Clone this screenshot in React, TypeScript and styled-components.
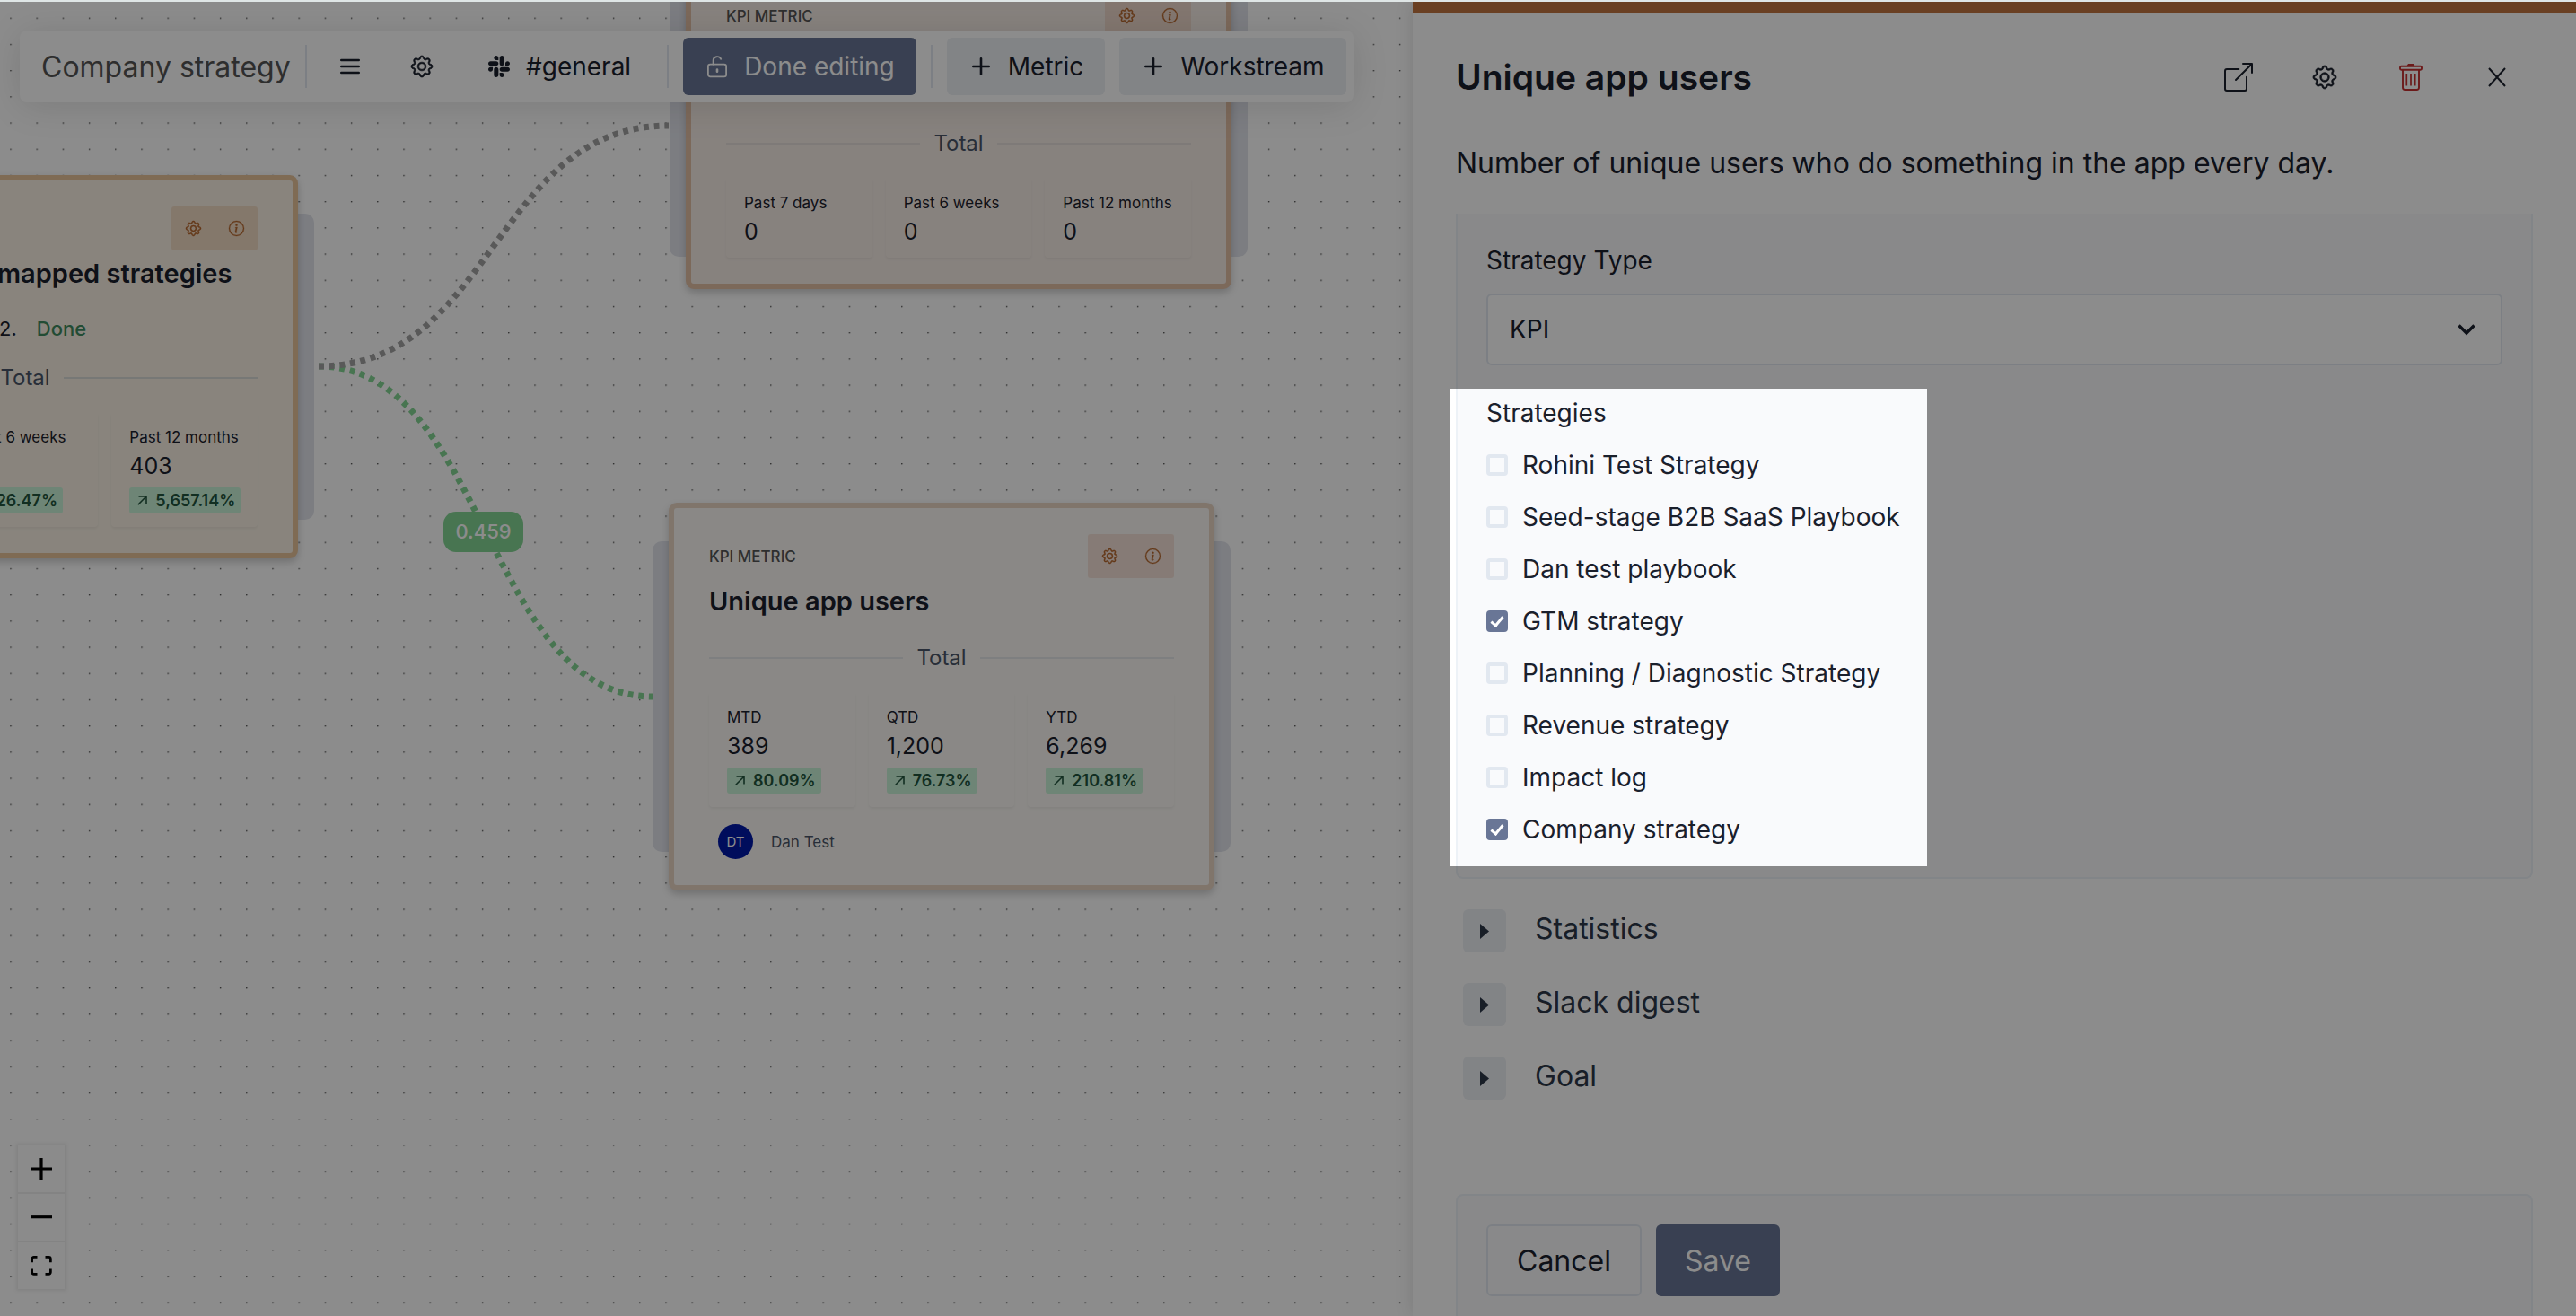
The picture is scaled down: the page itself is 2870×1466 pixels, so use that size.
import React, { useState } from "react";
import styled, { createGlobalStyle } from "styled-components";
import { BsBoxArrowUpRight, BsGear, BsInfoCircle, BsSlack } from "react-icons/bs";

const GlobalStyle = createGlobalStyle`
  *, *::before, *::after { box-sizing: border-box; }
  body {
    margin: 0;
    background: #fff;
    color: #1a202c;
    font-family: Inter, "Liberation Sans", sans-serif;
  }
  button, input, select { font: inherit; color: inherit; }
  h1, h2, p { margin: 0; }
`;

const Page = styled.div`
  display: flex;
  height: 100vh;
  overflow: hidden;
  border-top: 2px solid #dfe6e6;
`;

/* ---------- canvas ---------- */

const Canvas = styled.main`
  position: relative;
  flex: 1;
  min-width: 0;
  overflow: hidden;
`;

const Graph = styled.svg`
  position: absolute;
  inset: 0;
  width: 100%;
  height: 100%;
`;

const Node = styled.article<{ $x: number; $y: number }>`
  position: absolute;
  left: ${(p) => p.$x}px;
  top: ${(p) => p.$y}px;
  width: 608px;

  &::before {
    content: "";
    position: absolute;
    inset: 10% -18px;
    border-radius: 10px;
    background: #e2e4ec;
  }
`;

const Card = styled.div<{ $border: string; $fill: string }>`
  position: relative;
  display: flex;
  flex-direction: column;
  padding: 29px 39px;
  border: 6px solid ${(p) => p.$border};
  border-radius: 9px;
  background: ${(p) => p.$fill};
  box-shadow: 0 4px 8px rgba(0, 0, 0, 0.2);
`;

const CardHeader = styled.header`
  display: flex;
  align-items: center;
  justify-content: space-between;
  height: 49px;
`;

const Kind = styled.span`
  font-size: 17px;
  font-weight: 500;
  color: #555;
`;

const CardTools = styled.div<{ $fill: string }>`
  display: flex;
  align-self: stretch;
  border-radius: 3px;
  background: ${(p) => p.$fill};
`;

const CardTool = styled.button`
  display: grid;
  place-items: center;
  width: 48px;
  padding: 0;
  border: 0;
  background: none;
  color: #b5652b;
`;

const CardTitle = styled.h2`
  margin-top: 6px;
  font-size: 29px;
  font-weight: 600;
  line-height: 40px;
  white-space: nowrap;
`;

const Status = styled.p`
  display: flex;
  gap: 22px;
  margin-top: 26px;
  font-size: 22px;
  line-height: 30px;
  white-space: nowrap;

  strong { font-weight: 500; color: #3f8a60; }
`;

const Total = styled.div<{ $gap: number; $line: string }>`
  display: flex;
  align-items: center;
  gap: 15px;
  margin: ${(p) => p.$gap}px 0 22px;
  font-size: 24px;
  line-height: 32px;
  color: #4a5568;

  &::before, &::after {
    content: "";
    flex: 1;
    height: 2px;
    background: ${(p) => p.$line};
  }
`;

const Stats = styled.div`
  display: grid;
  grid-template-columns: repeat(3, 1fr);
  gap: 15px;
`;

const Stat = styled.div`
  display: flex;
  flex-direction: column;
  align-items: flex-start;
  padding: 15px 0 15px 20px;
  border-radius: 4px;
  box-shadow: 0 2px 3px rgba(0, 0, 0, 0.05);
  white-space: nowrap;
`;

const StatLabel = styled.span`
  font-size: 17px;
  line-height: 26px;
`;

const StatValue = styled.span`
  margin-top: 5px;
  font-size: 25px;
  line-height: 28px;
`;

const Change = styled.span`
  display: flex;
  align-items: center;
  gap: 9px;
  height: 29px;
  margin-top: 10px;
  padding: 0 6px 0 9px;
  border-radius: 3px;
  background: #c9f3d7;
  color: #22543d;
  font-size: 18px;
  font-weight: 600;
`;

const Owner = styled.div`
  display: flex;
  align-items: center;
  gap: 20px;
  margin-top: 19px;
  padding-left: 10px;
  font-size: 17px;
  color: #4a5568;
`;

const Avatar = styled.span`
  display: grid;
  place-items: center;
  width: 39px;
  height: 39px;
  border-radius: 50%;
  background: #0018a8;
  color: #fff;
  font-size: 15px;
`;

const EdgeLabel = styled.span`
  position: absolute;
  left: 494px;
  top: 568px;
  width: 89px;
  border-radius: 14px;
  background: #84d594;
  color: #fff;
  font-size: 22px;
  font-weight: 500;
  line-height: 45px;
  text-align: center;
`;

const Toolbar = styled.div`
  position: absolute;
  top: 32px;
  left: 22px;
  display: flex;
  align-items: center;
  gap: 16px;
  height: 80px;
  padding: 8px;
  border-radius: 8px;
  background: #fff;
  box-shadow: 0 4px 40px rgba(0, 0, 0, 0.12);
`;

const NameInput = styled.input`
  width: 294px;
  padding: 0 0 0 16px;
  border: 0;
  outline: 0;
  background: none;
  font-size: 32px;
  color: #555;
`;

const Divider = styled.span`
  width: 2px;
  height: 48px;
  background: #e2e8f0;
`;

const ToolButton = styled.button<{ $tone?: "solid" | "soft"; $square?: boolean }>`
  display: flex;
  align-items: center;
  justify-content: center;
  gap: 16px;
  height: 64px;
  width: ${(p) => (p.$square ? "64px" : "auto")};
  padding: 0 ${(p) => (p.$square ? 0 : 24)}px;
  border: 0;
  border-radius: 6px;
  background: ${(p) => (p.$tone === "solid" ? "#697696" : p.$tone === "soft" ? "#edf0f4" : "transparent")};
  color: ${(p) => (p.$tone === "solid" ? "#fff" : "#1a202c")};
  font-size: 28px;
  white-space: nowrap;
`;

const IconBox = styled.span`
  display: grid;
  place-items: center;
  width: 28px;
  height: 28px;
`;

const Zoom = styled.div`
  position: absolute;
  left: 20px;
  bottom: 30px;
  display: grid;
  gap: 2px;
  background: #eee;
  box-shadow: 0 0 4px 2px rgba(0, 0, 0, 0.08);
`;

const ZoomButton = styled.button`
  display: grid;
  place-items: center;
  width: 52px;
  height: 52px;
  padding: 0;
  border: 0;
  background: #fefefe;
`;

/* ---------- side panel ---------- */

const Panel = styled.aside`
  position: relative;
  z-index: 2;
  display: flex;
  flex-direction: column;
  flex: none;
  width: 1296px;
  padding: 48px 48px 0;
  border-top: 12px solid #c27641;
  background: #fff;
  box-shadow: 0 0 20px rgba(0, 0, 0, 0.12);
`;

const PanelHeader = styled.header`
  display: flex;
  align-items: center;
  justify-content: space-between;
  height: 48px;
`;

const PanelTitle = styled.h1`
  font-size: 39px;
  font-weight: 600;
  line-height: 48px;
`;

const PanelTools = styled.div`
  display: flex;
  gap: 16px;
`;

const PanelTool = styled.button<{ $danger?: boolean }>`
  display: grid;
  place-items: center;
  width: 80px;
  height: 80px;
  padding: 0;
  border: 0;
  background: none;
  color: ${(p) => (p.$danger ? "#c53030" : "#1a202c")};
`;

const Description = styled.p`
  margin: 48px 0 32px;
  font-size: 32px;
  line-height: 48px;
`;

const Form = styled.form`
  display: flex;
  flex-direction: column;
  flex: 1;
`;

const Fields = styled.div`
  display: flex;
  flex-direction: column;
  padding: 32px;
  border: 2px solid #edf2f7;
  border-top: 0;
  border-radius: 0 0 8px 8px;
  background: #f9fafc;
  font-size: 28px;
  line-height: 40px;
`;

const SelectWrap = styled.div`
  position: relative;
  margin: 17px 0 33px;

  svg {
    position: absolute;
    right: 30px;
    top: 34px;
    pointer-events: none;
  }
`;

const Select = styled.select`
  display: block;
  width: 100%;
  height: 80px;
  padding: 0 24px;
  appearance: none;
  border: 2px solid #e2e8f0;
  border-radius: 6px;
  background: #fff;
  color: #1a202c;
`;

/* The tour overlay dims the page around this group. */
const Spotlight = styled.div`
  position: relative;

  &::after {
    content: "";
    position: absolute;
    top: -7px;
    left: -41px;
    width: 532px;
    height: 532px;
    box-shadow: 0 0 0 4000px rgba(0, 0, 0, 0.45);
    pointer-events: none;
  }
`;

const Strategies = styled.fieldset`
  min-width: 0;
  margin: 0;
  padding: 0;
  border: 0;
`;

const Legend = styled.legend`
  margin-bottom: 17px;
  padding: 0;
`;

const Options = styled.div`
  display: flex;
  flex-direction: column;
  align-items: flex-start;
  gap: 16px;
`;

const Option = styled.label`
  display: flex;
  align-items: center;
  gap: 16px;
  line-height: 42px;
`;

const Check = styled.input`
  display: grid;
  place-items: center;
  width: 24px;
  height: 24px;
  margin: 0;
  appearance: none;
  border: 4px solid #e2e8f0;
  border-radius: 4px;

  &:checked { border-color: #697696; background: #697696; }

  &:checked::after {
    content: "";
    width: 8px;
    height: 14px;
    margin-bottom: 4px;
    border: solid #fff;
    border-width: 0 3px 3px 0;
    transform: rotate(40deg);
  }
`;

const Sections = styled.div`
  display: flex;
  flex-direction: column;
  gap: 34px;
  padding: 34px 8px 0;
`;

const Section = styled.div`
  display: flex;
  align-items: center;
  gap: 32px;
  height: 48px;
  color: #2d3748;
`;

const SectionName = styled.h2`
  padding-bottom: 4px;
  font-size: 32px;
  font-weight: 400;
  line-height: 44px;
`;

const Toggle = styled.button`
  display: grid;
  place-items: center;
  width: 48px;
  height: 48px;
  padding: 0;
  border: 0;
  border-radius: 6px;
  background: #edf0f4;
`;

const Footer = styled.footer`
  display: flex;
  gap: 16px;
  margin-top: auto;
  padding: 32px 32px 22px;
  border: 2px solid #edf2f7;
  border-bottom: 0;
  border-radius: 8px 8px 0 0;
  background: #f9fafc;
`;

const ActionButton = styled.button<{ $primary?: boolean }>`
  height: 80px;
  padding: 0 32px;
  border: ${(p) => (p.$primary ? "0" : "2px solid #e2e8f0")};
  border-radius: 6px;
  background: ${(p) => (p.$primary ? "#697696" : "transparent")};
  color: ${(p) => (p.$primary ? "#fff" : "#1a202c")};
  font-size: 32px;
`;

/* ---------- icons ---------- */

const MenuIcon = () => (
  <svg width="22" height="18" viewBox="0 0 22 18" stroke="currentColor" strokeWidth="2.4" strokeLinecap="round">
    <path d="M1.2 2h19.6M1.2 9h19.6M1.2 16h19.6" />
  </svg>
);

const GearIcon = ({ size }: { size: number }) => (
  <BsGear size={size} stroke="currentColor" strokeWidth={0.45} overflow="visible" />
);

const PlusIcon = () => (
  <svg width="20" height="20" viewBox="0 0 20 20" stroke="currentColor" strokeWidth="2.6" strokeLinecap="round">
    <path d="M10 1.3v17.4M1.3 10h17.4" />
  </svg>
);

const UnlockIcon = () => (
  <svg width="22" height="25" viewBox="0 0 22 25" fill="none" stroke="currentColor" strokeWidth="1.8" strokeLinecap="round" strokeLinejoin="round">
    <rect x="0.9" y="9.6" width="20.2" height="13.8" rx="2.4" />
    <path d="M6.6 9.6V5.6a4.5 4.5 0 0 1 8.6-1.8" />
    <path d="M11 15.6v2.2" strokeWidth="2.6" />
  </svg>
);

const TrashIcon = () => (
  <svg width="26" height="30" viewBox="0 0 26 30" fill="none" stroke="currentColor" strokeWidth="1.9">
    <path d="M9.500 2.500l1-1.500h5l1 1.500" fill="currentColor" />
    <rect x="1" y="2.800" width="24" height="4" rx="1.200" />
    <path d="M4 7v19.500a2.500 2.500 0 0 0 2.500 2.500h13a2.500 2.500 0 0 0 2.500-2.500V7" />
    <path d="M8.300 11v13.500M13 11v13.500M17.700 11v13.500" strokeWidth="1.700" />
  </svg>
);

const CloseIcon = () => (
  <svg width="20" height="22" viewBox="0 0 20 22" stroke="currentColor" strokeWidth="2">
    <path d="M1 1l18 20M19 1L1 21" />
  </svg>
);

const ChevronIcon = () => (
  <svg width="20" height="13" viewBox="0 0 20 13" fill="none" stroke="#1a202c" strokeWidth="3.4">
    <path d="M1.5 1.5L10 10l8.500-8.500" />
  </svg>
);

const TriangleIcon = () => (
  <svg width="10" height="17" viewBox="0 0 10 17" fill="#2d3748">
    <path d="M0 0l10 8.500L0 17z" />
  </svg>
);

const RiseIcon = () => (
  <svg width="11" height="11" viewBox="0 0 11 11" fill="none" stroke="currentColor" strokeWidth="1.6">
    <path d="M0.800 10.200L10 1M1.500 1H10v8.500" />
  </svg>
);

const ZoomInIcon = () => (
  <svg width="24" height="24" viewBox="0 0 32 32">
    <path d="M32 18.133H18.133V32h-4.266V18.133H0v-4.266h13.867V0h4.266v13.867H32z" />
  </svg>
);

const ZoomOutIcon = () => (
  <svg width="24" height="4" viewBox="0 0 32 5">
    <path d="M0 0h32v4.200H0z" />
  </svg>
);

const FitIcon = () => (
  <svg width="24" height="22" viewBox="0 0 32 30">
    <path d="M3.692 4.63c0-.53.4-.938.939-.938h5.215V0H4.708C2.13 0 0 2.054 0 4.63v5.216h3.692V4.631zM27.354 0h-5.200v3.692h5.170c.53 0 .984.4.984.939v5.215H32V4.631A4.624 4.624 0 0027.354 0zm.954 24.830c0 .532-.4.940-.939.940h-5.215v3.768h5.215c2.577 0 4.631-2.130 4.631-4.707v-5.139h-3.692v5.139zm-23.677.940a.919.919 0 01-.939-.940v-5.138H0v5.139c0 2.577 2.130 4.707 4.708 4.707h5.138V25.770H4.631z" />
  </svg>
);

/* ---------- data ---------- */

type StatData = { label: string; value: string; change?: string };

type MetricProps = {
  id: string;
  x: number;
  y: number;
  border: string;
  fill: string;
  tools: string;
  line: string;
  title?: string;
  due?: string;
  state?: string;
  totalGap: number;
  stats: StatData[];
  owner?: { initials: string; name: string };
};

const metrics: MetricProps[] = [
  {
    id: "mapped", x: -276, y: 193, border: "#e7c39a", fill: "#f9f1e4", tools: "#f1dac4", line: "#d9dad8",
    title: "Customers with mapped strategies",
    due: "Target 400 by fall 2022.", state: "Done", totalGap: 24,
    stats: [
      { label: "Past 7 days", value: "12", change: "20.00%" },
      { label: "Past 6 weeks", value: "86", change: "26.47%" },
      { label: "Past 12 months", value: "403", change: "5,657.14%" },
    ],
  },
  {
    id: "idle", x: 764, y: -44, border: "#e2bfa5", fill: "#f6ede6", tools: "#efd9cc", line: "#e6dfda",
    totalGap: 102,
    stats: [
      { label: "Past 7 days", value: "0" },
      { label: "Past 6 weeks", value: "0" },
      { label: "Past 12 months", value: "0" },
    ],
  },
  {
    id: "users", x: 745, y: 558, border: "#ead5c4", fill: "#fbf8f4", tools: "#f4e1d7", line: "#e6e8ea",
    title: "Unique app users", totalGap: 27,
    stats: [
      { label: "MTD", value: "389", change: "80.09%" },
      { label: "QTD", value: "1,200", change: "76.73%" },
      { label: "YTD", value: "6,269", change: "210.81%" },
    ],
    owner: { initials: "DT", name: "Dan Test" },
  },
];

const strategyNames = [
  "Rohini Test Strategy",
  "Seed-stage B2B SaaS Playbook",
  "Dan test playbook",
  "GTM strategy",
  "Planning / Diagnostic Strategy",
  "Revenue strategy",
  "Impact log",
  "Company strategy",
];

function Metric(m: MetricProps) {
  return (
    <Node $x={m.x} $y={m.y}>
      <Card $border={m.border} $fill={m.fill}>
        <CardHeader>
          <Kind>KPI METRIC</Kind>
          <CardTools $fill={m.tools}>
            <CardTool aria-label="Metric settings"><GearIcon size={17} /></CardTool>
            <CardTool aria-label="Metric details">
              <BsInfoCircle size={17} stroke="currentColor" strokeWidth={0.3} overflow="visible" />
            </CardTool>
          </CardTools>
        </CardHeader>
        {m.title && <CardTitle>{m.title}</CardTitle>}
        {m.due && <Status>{m.due}<strong>{m.state}</strong></Status>}
        <Total $gap={m.totalGap} $line={m.line}>Total</Total>
        <Stats>
          {m.stats.map((s) => (
            <Stat key={s.label}>
              <StatLabel>{s.label}</StatLabel>
              <StatValue>{s.value}</StatValue>
              {s.change && <Change><RiseIcon />{s.change}</Change>}
            </Stat>
          ))}
        </Stats>
        {m.owner && <Owner><Avatar>{m.owner.initials}</Avatar>{m.owner.name}</Owner>}
      </Card>
    </Node>
  );
}

export default function App() {
  const [checked, setChecked] = useState(["GTM strategy", "Company strategy"]);
  const flip = (name: string) =>
    setChecked((c) => (c.includes(name) ? c.filter((n) => n !== name) : [...c, name]));

  return (
    <>
      <GlobalStyle />
      <Page>
        <Canvas>
          <Graph aria-hidden="true">
            <defs>
              <pattern id="dots" x="11.3" y="17.6" width="29.2" height="29.2" patternUnits="userSpaceOnUse">
                <circle cx="0.73" cy="0.73" r="0.73" fill="#222" />
              </pattern>
            </defs>
            <rect width="100%" height="100%" fill="url(#dots)" />
            <g fill="none" strokeWidth="7" strokeDasharray="5.840 5.840">
              <path d="M355 406C541 406 541 774 727 774" stroke="#84d594" />
              <path d="M355 406C550 406 550 138 745 138" stroke="#a2a2a2" />
            </g>
          </Graph>
          {metrics.map((m) => <Metric key={m.id} {...m} />)}
          <EdgeLabel>0.459</EdgeLabel>
          <Toolbar>
            <NameInput aria-label="Strategy name" defaultValue="Company strategy" />
            <Divider />
            <ToolButton $square aria-label="Menu"><MenuIcon /></ToolButton>
            <ToolButton $square aria-label="Settings"><GearIcon size={24} /></ToolButton>
            <ToolButton><IconBox><BsSlack size={24} /></IconBox>#general</ToolButton>
            <Divider />
            <ToolButton $tone="solid"><IconBox><UnlockIcon /></IconBox>Done editing</ToolButton>
            <Divider />
            <ToolButton $tone="soft"><IconBox><PlusIcon /></IconBox>Metric</ToolButton>
            <ToolButton $tone="soft"><IconBox><PlusIcon /></IconBox>Workstream</ToolButton>
          </Toolbar>
          <Zoom>
            <ZoomButton aria-label="Zoom in"><ZoomInIcon /></ZoomButton>
            <ZoomButton aria-label="Zoom out"><ZoomOutIcon /></ZoomButton>
            <ZoomButton aria-label="Fit view"><FitIcon /></ZoomButton>
          </Zoom>
        </Canvas>

        <Panel>
          <PanelHeader>
            <PanelTitle>Unique app users</PanelTitle>
            <PanelTools>
              <PanelTool aria-label="Open"><BsBoxArrowUpRight size={32} /></PanelTool>
              <PanelTool aria-label="Settings"><GearIcon size={26} /></PanelTool>
              <PanelTool $danger aria-label="Delete"><TrashIcon /></PanelTool>
              <PanelTool aria-label="Close"><CloseIcon /></PanelTool>
            </PanelTools>
          </PanelHeader>
          <Description>Number of unique users who do something in the app every day.</Description>
          <Form onSubmit={(e) => e.preventDefault()}>
            <Fields>
              <label htmlFor="strategy-type">Strategy Type</label>
              <SelectWrap>
                <Select id="strategy-type" defaultValue="KPI">
                  <option>KPI</option>
                </Select>
                <ChevronIcon />
              </SelectWrap>
              <Spotlight>
                <Strategies>
                  <Legend>Strategies</Legend>
                  <Options>
                    {strategyNames.map((name) => (
                      <Option key={name}>
                        <Check type="checkbox" checked={checked.includes(name)} onChange={() => flip(name)} />
                        {name}
                      </Option>
                    ))}
                  </Options>
                </Strategies>
              </Spotlight>
            </Fields>
            <Sections>
              {["Statistics", "Slack digest", "Goal"].map((name) => (
                <Section key={name}>
                  <Toggle type="button" aria-label={`Expand ${name}`}><TriangleIcon /></Toggle>
                  <SectionName>{name}</SectionName>
                </Section>
              ))}
            </Sections>
            <Footer>
              <ActionButton type="button">Cancel</ActionButton>
              <ActionButton type="submit" $primary>Save</ActionButton>
            </Footer>
          </Form>
        </Panel>
      </Page>
    </>
  );
}
